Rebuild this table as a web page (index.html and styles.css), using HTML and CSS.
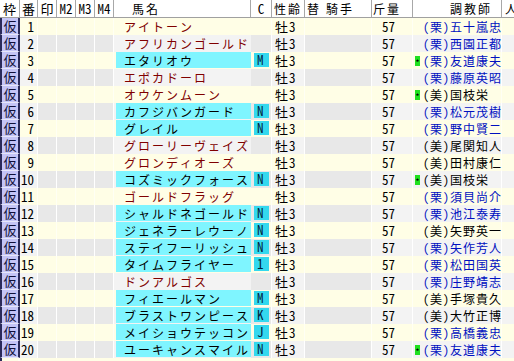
FILE: index.html
```html
<!DOCTYPE html>
<html lang="ja">
<head>
<meta charset="utf-8">
<title>出馬表</title>
<link rel="stylesheet" href="styles.css">
</head>
<body>
<div class="grid">
  <div class="row head">
    <span class="h hc">枠</span><span class="h hc">番</span><span class="h hc">印</span><span class="h hc">M2</span><span class="h hc">M3</span><span class="h hc">M4</span>
    <span class="h hname">馬名</span><span class="h hc">C</span><span class="h hsex">性齢</span><span class="h hjk">替<span class="sp"></span>騎手</span><span class="h hkin">斤量</span><span class="h htr">調教師</span><span class="h hx">人</span>
  </div>

  <div class="row odd"><span class="c waku">仮</span><span class="c ban">1</span><span class="c g"></span><span class="c g"></span><span class="c g"></span><span class="c g"></span><span class="c name"><span class="nm">アイトーン</span></span><span class="c g cc"></span><span class="c sex">牡3</span><span class="c g"></span><span class="c kin">57</span><span class="c tr"><span class="star"></span><span class="ritto">(栗)五十嵐忠</span></span><span class="c x"></span></div>
  <div class="row even"><span class="c waku">仮</span><span class="c ban">2</span><span class="c g"></span><span class="c g"></span><span class="c g"></span><span class="c g"></span><span class="c name"><span class="nm">アフリカンゴールド</span></span><span class="c g cc"></span><span class="c sex">牡3</span><span class="c g"></span><span class="c kin">57</span><span class="c tr"><span class="star"></span><span class="ritto">(栗)西園正都</span></span><span class="c x"></span></div>
  <div class="row odd"><span class="c waku">仮</span><span class="c ban">3</span><span class="c g"></span><span class="c g"></span><span class="c g"></span><span class="c g"></span><span class="c name"><span class="nm cy">エタリオウ</span></span><span class="c g cc"><span class="tag">M</span></span><span class="c sex">牡3</span><span class="c g"></span><span class="c kin">57</span><span class="c tr"><span class="star on">*</span><span class="ritto">(栗)友道康夫</span></span><span class="c x"></span></div>
  <div class="row even"><span class="c waku">仮</span><span class="c ban">4</span><span class="c g"></span><span class="c g"></span><span class="c g"></span><span class="c g"></span><span class="c name"><span class="nm">エポカドーロ</span></span><span class="c g cc"></span><span class="c sex">牡3</span><span class="c g"></span><span class="c kin">57</span><span class="c tr"><span class="star"></span><span class="ritto">(栗)藤原英昭</span></span><span class="c x"></span></div>
  <div class="row odd"><span class="c waku">仮</span><span class="c ban">5</span><span class="c g"></span><span class="c g"></span><span class="c g"></span><span class="c g"></span><span class="c name"><span class="nm">オウケンムーン</span></span><span class="c g cc"></span><span class="c sex">牡3</span><span class="c g"></span><span class="c kin">57</span><span class="c tr"><span class="star on">*</span><span class="miho">(美)国枝栄</span></span><span class="c x"></span></div>
  <div class="row even"><span class="c waku">仮</span><span class="c ban">6</span><span class="c g"></span><span class="c g"></span><span class="c g"></span><span class="c g"></span><span class="c name"><span class="nm cy">カフジバンガード</span></span><span class="c g cc"><span class="tag">N</span></span><span class="c sex">牡3</span><span class="c g"></span><span class="c kin">57</span><span class="c tr"><span class="star"></span><span class="ritto">(栗)松元茂樹</span></span><span class="c x"></span></div>
  <div class="row odd"><span class="c waku">仮</span><span class="c ban">7</span><span class="c g"></span><span class="c g"></span><span class="c g"></span><span class="c g"></span><span class="c name"><span class="nm cy">グレイル</span></span><span class="c g cc"><span class="tag">N</span></span><span class="c sex">牡3</span><span class="c g"></span><span class="c kin">57</span><span class="c tr"><span class="star"></span><span class="ritto">(栗)野中賢二</span></span><span class="c x"></span></div>
  <div class="row even"><span class="c waku">仮</span><span class="c ban">8</span><span class="c g"></span><span class="c g"></span><span class="c g"></span><span class="c g"></span><span class="c name"><span class="nm">グローリーヴェイズ</span></span><span class="c g cc"></span><span class="c sex">牡3</span><span class="c g"></span><span class="c kin">57</span><span class="c tr"><span class="star"></span><span class="miho">(美)尾関知人</span></span><span class="c x"></span></div>
  <div class="row odd"><span class="c waku">仮</span><span class="c ban">9</span><span class="c g"></span><span class="c g"></span><span class="c g"></span><span class="c g"></span><span class="c name"><span class="nm">グロンディオーズ</span></span><span class="c g cc"></span><span class="c sex">牡3</span><span class="c g"></span><span class="c kin">57</span><span class="c tr"><span class="star"></span><span class="miho">(美)田村康仁</span></span><span class="c x"></span></div>
  <div class="row even"><span class="c waku">仮</span><span class="c ban">10</span><span class="c g"></span><span class="c g"></span><span class="c g"></span><span class="c g"></span><span class="c name"><span class="nm cy">コズミックフォース</span></span><span class="c g cc"><span class="tag">N</span></span><span class="c sex">牡3</span><span class="c g"></span><span class="c kin">57</span><span class="c tr"><span class="star on">*</span><span class="miho">(美)国枝栄</span></span><span class="c x"></span></div>
  <div class="row odd"><span class="c waku">仮</span><span class="c ban">11</span><span class="c g"></span><span class="c g"></span><span class="c g"></span><span class="c g"></span><span class="c name"><span class="nm">ゴールドフラッグ</span></span><span class="c g cc"></span><span class="c sex">牡3</span><span class="c g"></span><span class="c kin">57</span><span class="c tr"><span class="star"></span><span class="ritto">(栗)須貝尚介</span></span><span class="c x"></span></div>
  <div class="row even"><span class="c waku">仮</span><span class="c ban">12</span><span class="c g"></span><span class="c g"></span><span class="c g"></span><span class="c g"></span><span class="c name"><span class="nm cy">シャルドネゴールド</span></span><span class="c g cc"><span class="tag">N</span></span><span class="c sex">牡3</span><span class="c g"></span><span class="c kin">57</span><span class="c tr"><span class="star"></span><span class="ritto">(栗)池江泰寿</span></span><span class="c x"></span></div>
  <div class="row odd"><span class="c waku">仮</span><span class="c ban">13</span><span class="c g"></span><span class="c g"></span><span class="c g"></span><span class="c g"></span><span class="c name"><span class="nm cy">ジェネラーレウーノ</span></span><span class="c g cc"><span class="tag">N</span></span><span class="c sex">牡3</span><span class="c g"></span><span class="c kin">57</span><span class="c tr"><span class="star"></span><span class="miho">(美)矢野英一</span></span><span class="c x"></span></div>
  <div class="row even"><span class="c waku">仮</span><span class="c ban">14</span><span class="c g"></span><span class="c g"></span><span class="c g"></span><span class="c g"></span><span class="c name"><span class="nm cy">ステイフーリッシュ</span></span><span class="c g cc"><span class="tag">N</span></span><span class="c sex">牡3</span><span class="c g"></span><span class="c kin">57</span><span class="c tr"><span class="star"></span><span class="ritto">(栗)矢作芳人</span></span><span class="c x"></span></div>
  <div class="row odd"><span class="c waku">仮</span><span class="c ban">15</span><span class="c g"></span><span class="c g"></span><span class="c g"></span><span class="c g"></span><span class="c name"><span class="nm cy">タイムフライヤー</span></span><span class="c g cc"><span class="tag">1</span></span><span class="c sex">牡3</span><span class="c g"></span><span class="c kin">57</span><span class="c tr"><span class="star"></span><span class="ritto">(栗)松田国英</span></span><span class="c x"></span></div>
  <div class="row even"><span class="c waku">仮</span><span class="c ban">16</span><span class="c g"></span><span class="c g"></span><span class="c g"></span><span class="c g"></span><span class="c name"><span class="nm">ドンアルゴス</span></span><span class="c g cc"></span><span class="c sex">牡3</span><span class="c g"></span><span class="c kin">57</span><span class="c tr"><span class="star"></span><span class="ritto">(栗)庄野靖志</span></span><span class="c x"></span></div>
  <div class="row odd"><span class="c waku">仮</span><span class="c ban">17</span><span class="c g"></span><span class="c g"></span><span class="c g"></span><span class="c g"></span><span class="c name"><span class="nm cy">フィエールマン</span></span><span class="c g cc"><span class="tag">M</span></span><span class="c sex">牡3</span><span class="c g"></span><span class="c kin">57</span><span class="c tr"><span class="star"></span><span class="miho">(美)手塚貴久</span></span><span class="c x"></span></div>
  <div class="row even"><span class="c waku">仮</span><span class="c ban">18</span><span class="c g"></span><span class="c g"></span><span class="c g"></span><span class="c g"></span><span class="c name"><span class="nm cy">ブラストワンピース</span></span><span class="c g cc"><span class="tag">K</span></span><span class="c sex">牡3</span><span class="c g"></span><span class="c kin">57</span><span class="c tr"><span class="star"></span><span class="miho">(美)大竹正博</span></span><span class="c x"></span></div>
  <div class="row odd"><span class="c waku">仮</span><span class="c ban">19</span><span class="c g"></span><span class="c g"></span><span class="c g"></span><span class="c g"></span><span class="c name"><span class="nm cy">メイショウテッコン</span></span><span class="c g cc"><span class="tag">J</span></span><span class="c sex">牡3</span><span class="c g"></span><span class="c kin">57</span><span class="c tr"><span class="star"></span><span class="ritto">(栗)高橋義忠</span></span><span class="c x"></span></div>
  <div class="row even"><span class="c waku">仮</span><span class="c ban">20</span><span class="c g"></span><span class="c g"></span><span class="c g"></span><span class="c g"></span><span class="c name"><span class="nm cy">ユーキャンスマイル</span></span><span class="c g cc"><span class="tag">N</span></span><span class="c sex">牡3</span><span class="c g"></span><span class="c kin">57</span><span class="c tr"><span class="star on">*</span><span class="ritto">(栗)友道康夫</span></span><span class="c x"></span></div>
  <div class="row odd"><span class="c wakuend"></span></div>
</div>
</body>
</html>
```

FILE: styles.css
```css
html, body {
  margin: 0;
  padding: 0;
}
body {
  width: 514px;
  height: 361px;
  overflow: hidden;
  background: #fffee6;
  font-family: "Noto Sans Mono CJK JP", "Noto Sans CJK JP", sans-serif;
  font-size: 12px;
  color: #000;
}
.grid {
  display: flex;
  flex-direction: column;
  width: 514px;
}
.row {
  display: grid;
  grid-template-columns: 20px 18px 19px 19px 19px 19px 137px 21px 33px 67px 41px 89px 12px;
  height: 17px;
  line-height: 17px;
  white-space: nowrap;
}
.row.head {
  height: 18px;
  line-height: 17px;
  background: #ffffff;
  border-bottom: 1px solid #a0a0a0;
  box-sizing: border-box;
}
.h {
  border-right: 1px solid #a8a8a8;
  overflow: hidden;
  letter-spacing: 2px;
  font-size: 12px;
}
.hc { text-align: center; letter-spacing: 0; font-size: 13px; }
.hname { padding-left: 18px; }
.hsex { padding-left: 2px; }
.hjk { padding-left: 2px; }
.sp { display: inline-block; width: 5px; }
.hkin { padding-left: 1px; }
.htr { padding-left: 37px; }
.hx { border-right: none; padding-left: 3px; }

.odd { background: #fffee6; }
.even { background: #f3f3f3; }

.c {
  box-sizing: border-box;
  border-right: 1px solid #ffffff;
}
.odd .c { border-right-color: #fffff4; }

.waku, .wakuend {
  background: #c4c4f6;
  border-left: 2px solid #2a2a5a;
  border-right: 2px solid #2a2a5a;
  border-bottom: 1px solid #e6e6fa;
  text-align: center;
  color: #10103a;
  font-size: 13px;
  line-height: 16px;
}
.wakuend { background: #fffee6; border-bottom: none; }
.odd .waku { border-right-color: #2a2a5a; }

.ban {
  text-align: right;
  padding-right: 3px;
  font-size: 13px;
}
.even .g { background: #e8e8e8; }

.name { padding-left: 2px; border-right: none; }
.nm {
  display: block;
  height: 16px;
  line-height: 17px;
  padding-left: 8px;
  color: #800000;
  letter-spacing: 2px;
}
.nm.cy {
  background: #7ff5ff;
  color: #000;
}

.cc { padding: 1px 2px 1px 3px; }
.tag {
  display: block;
  height: 14px;
  line-height: 14px;
  background: #34d8ee;
  color: #00203a;
  padding-left: 3px;
  font-size: 13px;
}

.sex { padding-left: 3px; letter-spacing: 1px; font-size: 13px; }
.kin { padding-left: 10px; font-size: 13px; }

.tr {
  display: flex;
  align-items: center;
  padding-left: 2px;
  letter-spacing: 1px;
}
.star {
  flex: none;
  display: inline-block;
  width: 5px;
  height: 10px;
  line-height: 12px;
  margin-right: 3px;
  font-size: 7px;
  font-weight: bold;
  letter-spacing: 0;
  text-align: center;
  color: #000;
}
.star.on { background: #20e020; }
.ritto { flex: none; color: #0010c0; }
.miho { flex: none; color: #000; }
.x { border-right: none; }
```
